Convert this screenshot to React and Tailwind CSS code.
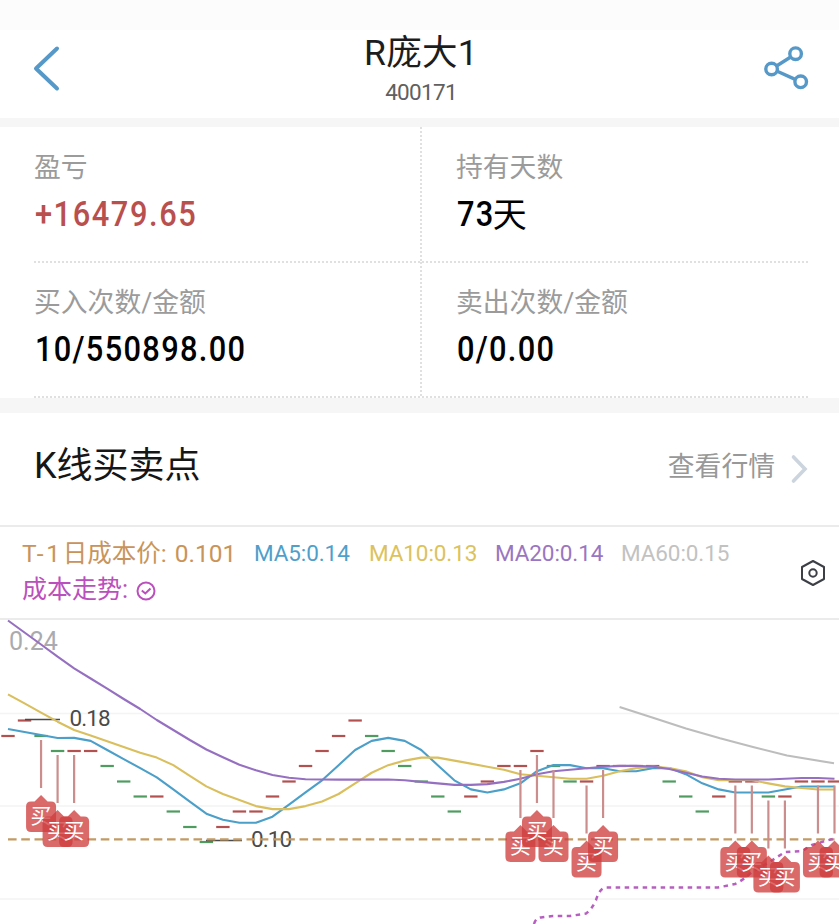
import clsx from 'clsx';

const STEP = 16.53;
const xAt = (i) => 8 + i * STEP;

// y position of each close, with its direction
const closes = [
  736, 720.5, 736, 751, 751, 751, 766, 781.5, 796.5, 796.5,
  811.5, 827, 842, 827, 811.5, 811.5, 796.5, 781.5, 766, 751,
  736, 720.5, 736, 751, 766, 781.5, 796.5, 811.5, 796.5, 781.5,
  766, 766, 751, 766, 781.5, 781.5, 766, 766, 766, 766,
  781.5, 796.5, 811.5, 796.5, 781.5, 781.5, 796.5, 796.5, 781.5, 781.5, 781.5,
];
const falling = [2, 3, 6, 7, 8, 10, 11, 12, 22, 23, 24, 25, 26, 27, 33, 34, 40, 41, 42, 46];
const buys = [2, 3, 4, 31, 33, 32, 35, 36, 44, 45, 46, 47, 49, 50];

// values before the window has enough closes of its own
const seed5 = [729, 732, 735, 738];
const seed10 = [694.3, 703.4, 712.6, 721.7, 730, 735.5, 741.3, 747, 752.7];
const seed20 = [
  620.5, 632.5, 644.5, 656.7, 668.3, 678.5, 688.7, 699, 709, 720,
  730, 740, 749.5, 757.3, 764.8, 770.3, 775, 777.7, 779.3,
];

function maPoints(n, seed) {
  return closes
    .map((_, i) => {
      if (i < n - 1) return `${xAt(i)},${seed[i]}`;
      const sum = closes.slice(i - n + 1, i + 1).reduce((a, b) => a + b, 0);
      return `${xAt(i)},${sum / n - 1}`;
    })
    .join(' ');
}

const legend = [
  { text: 'MA5:0.14', className: 'w-[115px] text-[#4f9fcb]' },
  { text: 'MA10:0.13', className: 'w-[126px] text-[#dcc25c]' },
  { text: 'MA20:0.14', className: 'w-[126px] text-[#9a76c2]' },
  { text: 'MA60:0.15', className: 'text-[#c2c2c2]' },
];

const stats = [
  { label: '盈亏', value: '+16479.65', red: true },
  { label: '持有天数', value: '73', unit: '天' },
  { label: '买入次数/金额', value: '10/550898.00' },
  { label: '卖出次数/金额', value: '0/0.00' },
];

function Header() {
  return (
    <header className="grid h-[88px] grid-cols-[1fr_auto_1fr] bg-white">
      <button className="ml-[30px] mt-[14px] h-12 w-9 justify-self-start" aria-label="返回">
        <svg width="36" height="48" fill="none" stroke="#5699c8" strokeWidth="4" strokeLinecap="round" strokeLinejoin="round">
          <path d="M27 4.500 L6 24.500 L27 44.500" />
        </svg>
      </button>
      <div className="flex flex-col items-center pl-[3px]">
        <h1 className="mt-1 h-[38px] text-[35.500px] leading-[38px] tracking-[0.3px] text-[#1d1d1d]">R庞大1</h1>
        <p className="mt-[7px] text-[22.500px] leading-[26px] tracking-[-0.7px] text-[#606060]">400171</p>
      </div>
      <button className="mr-7 mt-3 h-12 w-12 justify-self-end" aria-label="分享">
        <svg width="48" height="52" fill="none" stroke="#5699c8" strokeWidth="3.400">
          <circle cx="32.600" cy="11.700" r="5.800" />
          <circle cx="8.600" cy="27" r="5.800" />
          <circle cx="37.700" cy="39.800" r="5.800" />
          <path d="M13.500 24 L27.700 15 M14.200 29.300 L32.200 37.400" />
        </svg>
      </button>
    </header>
  );
}

function Dots({ vertical }) {
  return vertical ? (
    <div className="w-0.5 bg-[repeating-linear-gradient(180deg,#e0e0e0_0_2px,transparent_2px_4px)]" />
  ) : (
    <div className="ml-[34px] mr-[30px] h-0.5 bg-[repeating-linear-gradient(90deg,#e0e0e0_0_2px,transparent_2px_4px)]" />
  );
}

function Stat({ label, value, unit, red }) {
  return (
    <div className="flex-1 pl-[34px]">
      <p className="mt-[25px] text-[26.800px] leading-8 text-[#9b9b9b]">{label}</p>
      <p className={clsx('mt-[11px] flex text-[35px] font-medium leading-10', red ? 'text-[#b9504e]' : 'text-black')}>
        <span className={clsx('inline-block origin-left scale-x-[0.88]', red ? 'pl-px tracking-[1.8px]' : 'pl-px tracking-[1.5px]')}>
          {value}
        </span>
        {unit && <span className="-ml-[7px] text-[34px] font-normal">{unit}</span>}
      </p>
    </div>
  );
}

function StatRow({ items, className }) {
  return (
    <>
      <div className={clsx('flex', className)}>
        <div className="flex w-[420px]"><Stat {...items[0]} /></div>
        <Dots vertical />
        <Stat {...items[1]} />
      </div>
      <Dots />
    </>
  );
}

function Legend() {
  return (
    <div className="flex h-[91px] justify-between">
      <div className="pl-[22px] pt-[9px]">
        <div className="flex h-9 items-center text-[22.500px] tracking-[-0.1px]">
          <span className="w-[232px] whitespace-nowrap text-[24.500px] tracking-normal text-[#c9945a]">
            <span className="tracking-[2.8px]">T-1</span>日成本价: <span className="ml-0.5">0.101</span>
          </span>
          {legend.map((item) => (
            <span key={item.text} className={item.className}>{item.text}</span>
          ))}
        </div>
        <div className="flex h-9 items-center text-[25px] text-[#bb4fbd]">
          成本走势:
          <svg className="ml-2 mt-0.5" width="20" height="20" fill="none" stroke="#bb4fbd" strokeWidth="2">
            <circle cx="10" cy="10" r="8.500" />
            <path d="M5.800 9.500 L9.300 12.500 L14.500 7.500" />
          </svg>
        </div>
      </div>
      <svg className="mr-[13px] mt-[32px]" width="26" height="28" fill="none" stroke="#3c4046" strokeWidth="2" strokeLinejoin="round">
        <path d="M13 2 L24 8 V20 L13 26 L2 20 V8 Z" />
        <circle cx="13" cy="14" r="3.700" />
      </svg>
    </div>
  );
}

function BuyMarker({ i }) {
  const x = xAt(i);
  const y = closes[i];
  return (
    <g>
      <path d={`M${x} ${y + 4} V${y + 52}`} stroke="#cb8e8d" strokeWidth="2.200" />
      <path
        d={`M${x} ${y + 59} l6.500 6.500 h3.500 q5 0 5 5 v20.500 q0 5 -5 5 h-20 q-5 0 -5 -5 v-20.500 q0 -5 5 -5 h3.500 z`}
        fill="#cf3b3b"
        fillOpacity="0.76"
      />
      <text x={x} y={y + 87.3} textAnchor="middle" fontSize="21" fill="#fff">买</text>
    </g>
  );
}

function KLineChart() {
  return (
    <svg className="block" width="839" height="306" viewBox="0 618 839 306" fill="none">
      <path d="M0 619 H839" stroke="#ebebeb" strokeWidth="2" />
      <path d="M0 713.500 H839 M0 806 H839 M0 899 H839" stroke="#f4f4f4" strokeWidth="1.500" />
      <text x="9" y="649.500" fontSize="25" fill="#a9abb1">0.24</text>

      {closes.map((y, i) => (
        <path
          key={i}
          d={`M${xAt(i) - 6.700} ${y} h13.400`}
          stroke={falling.includes(i) ? '#4f9c60' : '#b25150'}
          strokeWidth="2.200"
        />
      ))}

      <path d="M25 719.500 H60 M206 840.500 H242" stroke="#4a4a4a" strokeWidth="1.600" />
      <text x="69.500" y="726" fontSize="22.500" letterSpacing="-0.900" fill="#4a4a4a">0.18</text>
      <text x="251" y="847" fontSize="22.500" letterSpacing="-0.900" fill="#4a4a4a">0.10</text>

      <g strokeWidth="2.100" strokeLinejoin="round">
        <polyline points={maPoints(5, seed5)} stroke="#4b9fc9" />
        <polyline points={maPoints(10, seed10)} stroke="#dabf5e" />
        <polyline points={maPoints(20, seed20)} stroke="#9670c0" />
        <polyline points="619.600,707 653,717.700 686,728.500 720,738.300 753,747 787,755.500 834,763.300" stroke="#bdbdbd" />
      </g>

      <path d="M8 839.300 H834.500" stroke="#c19a64" strokeWidth="2.200" strokeDasharray="8.600 4.650" />
      <path
        d="M534 924 Q536 917.500 541 917.500 L553 916 L570 916 L586 913.500 Q592 909 596 900 Q600 887.500 606 887.500 H718 L735 884 Q742 881 752 872 L768 863 L785 852 L802 851 L812 845 L825 841 L834.500 838.500"
        stroke="#b75fc0"
        strokeWidth="2.500"
        strokeDasharray="4.500 4.500"
      />

      {buys.map((i) => <BuyMarker key={i} i={i} />)}
    </svg>
  );
}

export default function App() {
  return (
    <div className="h-[924px] w-[839px] overflow-hidden bg-white font-['Roboto','Noto_Sans_CJK_SC',sans-serif]">
      <div className="h-[30px] bg-[#fcfcfc]" />
      <Header />
      <div className="h-[9px] bg-[#f6f6f6]" />
      <section>
        <StatRow items={stats.slice(0, 2)} className="h-[134px]" />
        <StatRow items={stats.slice(2)} className="-mt-px h-[134px]" />
      </section>
      <div className="h-[15px] bg-[#f6f6f6]" />
      <section>
        <div className="flex h-[114px] items-start justify-between border-b-2 border-[#ebebeb] pl-[34px] pr-[31px]">
          <h2 className="mt-[29px] text-[36px] leading-[48px] text-[#161616]">K线买卖点</h2>
          <a className="mt-[36px] flex items-center text-[26.800px] leading-9 text-[#989898]">
            查看行情
            <svg className="ml-[15px] mt-1" width="18" height="30" fill="none" stroke="#ccd4de" strokeWidth="3.600" strokeLinecap="round">
              <path d="M3.500 3 L15 15 L3.500 27" />
            </svg>
          </a>
        </div>
        <Legend />
        <KLineChart />
      </section>
    </div>
  );
}
